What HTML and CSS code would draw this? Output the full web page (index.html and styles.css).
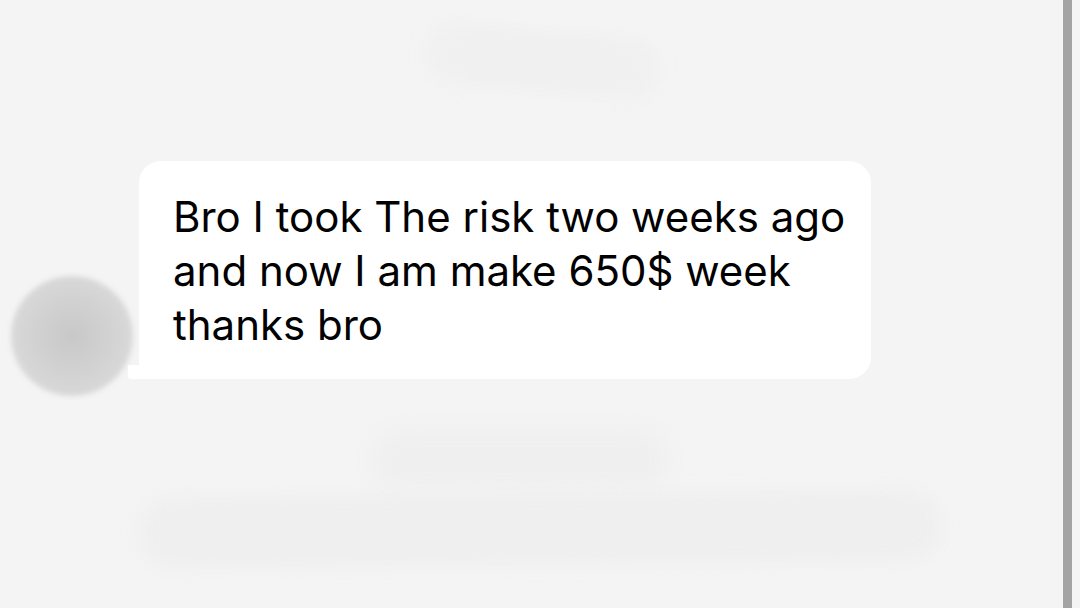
FILE: index.html
```html
<!DOCTYPE html>
<html lang="en">
<head>
  <meta charset="UTF-8">
  <meta name="viewport" content="width=device-width, initial-scale=1.0">
  <title>Message</title>
  <link rel="stylesheet" href="styles.css">
</head>
<body>
  <div class="screen">
    <div class="thread">
      <!-- blurred header -->
      <div class="smudge smudge-top"></div>

      <div class="message">
        <div class="avatar"></div>
        <div class="bubble">
          <p>Bro I took The risk two weeks ago and now I am make 650$ week thanks bro</p>
        </div>
      </div>

      <!-- blurred reply -->
      <div class="smudge smudge-mid"></div>
      <div class="smudge smudge-low"></div>
    </div>
    <div class="scrollbar"></div>
  </div>
</body>
</html>
```

FILE: styles.css
```css
body {
  margin: 0;
  background-color: #f4f4f4;
  font-family: Inter, "Noto Sans", sans-serif;
  overflow: hidden;
}

.screen {
  display: flex;
  height: 608px;
}

.thread {
  flex: 1;
  display: flex;
  flex-direction: column;
  align-items: flex-start;
}

.scrollbar {
  width: 9px;
  margin-right: 8px;
  background-color: #a3a3a3;
}

/* redacted bits */
.smudge {
  background-color: #efefef;
  filter: blur(10px);
}

.smudge-top {
  margin: 30px 0 0 425px;
  width: 235px;
  height: 62px;
  border-radius: 40px;
  background-color: #f0f0f0;
  transform: rotate(5deg);
}

.smudge-mid {
  margin: 52px 0 0 372px;
  width: 296px;
  height: 58px;
  border-radius: 30px;
}

.smudge-low {
  margin: 4px 0 0 138px;
  width: 804px;
  height: 72px;
  border-radius: 36px;
  transform: rotate(-0.6deg);
}

/* message row */
.message {
  display: flex;
  align-items: flex-end;
  gap: 6px;
  margin-top: 69px;
  margin-left: 11px;
}

.avatar {
  width: 122px;
  height: 120px;
  border-radius: 50%;
  margin-bottom: -17px;
  background: radial-gradient(circle at 50% 50%, #c8c8c8 0%, #d2d2d2 45%, #e0e0e0 100%);
  filter: blur(2.5px);
}

.bubble {
  position: relative;
  width: 732px;
  box-sizing: border-box;
  padding: 29px 16px 27px 34px;
  background-color: #fff;
  border-radius: 22px 22px 22px 4px;
}

/* little tail at bottom-left */
.bubble::before {
  content: "";
  position: absolute;
  left: -11px;
  bottom: 0;
  width: 24px;
  height: 14px;
  background-color: #fff;
  border-radius: 0 0 0 3px;
}

.bubble p {
  margin: 0;
  font-size: 42px;
  line-height: 54px;
  color: #000;
}
```
